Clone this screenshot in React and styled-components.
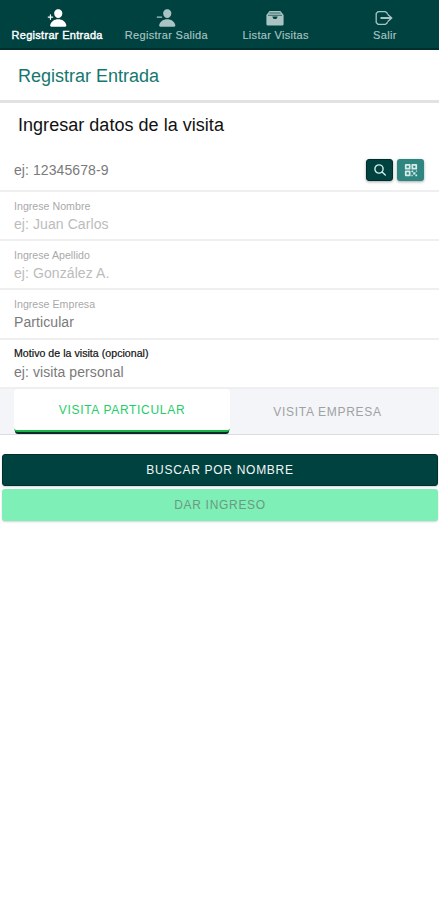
import React from 'react'
import styled, { createGlobalStyle } from 'styled-components'
import { IoPersonAdd, IoPersonRemove, IoQrCode } from 'react-icons/io5'

const GlobalStyle = createGlobalStyle`
  * {
    box-sizing: border-box;
  }
  body {
    margin: 0;
    background: #fff;
    font-family: 'Liberation Sans', Arial, sans-serif;
  }
`
const Page = styled.div`
  min-height: 900px;
  background: #fff;
`
const TabBar = styled.nav`
  display: flex;
  height: 50px;
  padding-left: 2px;
  background: #004240;
  border-bottom: 2px solid #00302e;
`
const NavItem = styled.div`
  flex: 1;
  display: flex;
  flex-direction: column;
  align-items: center;
  padding: 8px 0 0 1px;
  font-size: 11px;
  line-height: 13px;
  letter-spacing: 0.3px;
  white-space: nowrap;
  color: ${(props) => props.$active ? '#fff' : '#a9c4c3'};
  -webkit-text-stroke: ${(props) => props.$active ? '0.4px' : '0.15px'};
  svg {
    width: 20px;
    height: 20px;
    margin: 0 1px 1px 0;
  }
`
const Header = styled.header`
  height: 53px;
  padding: 15px 18px 0;
  border-bottom: 3px solid #e2e2e2;
  font-size: 18px;
  line-height: 22px;
  color: #15776f;
`
const Title = styled.h1`
  margin: 0;
  padding: 12px 18px 0;
  height: 47px;
  font-size: 18px;
  font-weight: 400;
  line-height: 21px;
  letter-spacing: 0.03px;
  color: #111;
`
const SearchRow = styled.div`
  display: flex;
  align-items: center;
  height: 42px;
  padding: 0 15px 0 14px;
  border-bottom: 2px solid #efefef;
`
const Value = styled.div`
  flex: 1;
  font-size: 14px;
  line-height: 18px;
  letter-spacing: 0.08px;
  color: ${(props) => props.$muted ? '#bcbcbc' : '#7a7a7a'};
`
const IconButton = styled.button`
  display: flex;
  align-items: center;
  justify-content: center;
  width: 27px;
  height: 22px;
  margin-left: 4px;
  padding: 0;
  border: ${(props) => props.$light ? '0' : '1px solid #002d2b'};
  border-radius: 3px;
  background: ${(props) => props.$light ? '#2f8580' : '#004240'};
  box-shadow: 0 1px 3px rgba(0, 0, 0, 0.35);
  color: #d5ecea;
  svg {
    width: 14px;
    height: 14px;
  }
`
const Field = styled.div`
  height: ${(props) => props.$height || 49}px;
  padding: ${(props) => props.$dark ? '6px' : '7px'} 14px 0;
  border-bottom: 2px solid #efefef;
`
const Label = styled.div`
  margin-bottom: ${(props) => props.$dark ? '3px' : '2px'};
  font-size: 10.6px;
  line-height: 14px;
  letter-spacing: 0.03px;
  color: ${(props) => props.$dark ? '#111' : '#a9a9a9'};
  -webkit-text-stroke: ${(props) => props.$dark ? '0.2px' : '0'};
`
const Segment = styled.div`
  display: flex;
  height: 46px;
  padding: 0 0 0 14px;
  background: #f3f5f8;
  border-bottom: 1px solid #dcdddf;
`
const SegmentButton = styled.div`
  display: flex;
  align-items: center;
  justify-content: center;
  width: ${(props) => props.$active ? '216px' : '195px'};
  height: 45px;
  font-size: 12px;
  letter-spacing: 0.7px;
  color: #a0a1a3;
  ${(props) => props.$active && `
    height: 43px;
    padding-top: 1px;
    background: #fff;
    border-bottom: 2px solid #17b548;
    border-radius: 4px;
    box-shadow: 0 3px 0 -1px #032b2a;
    color: #25cd68;
  `}
`
const Actions = styled.div`
  display: flex;
  flex-direction: column;
  gap: 3px;
  padding: 19px 1px 0 2px;
`
const ActionButton = styled.button`
  height: 32px;
  padding: 0;
  border: ${(props) => props.$disabled ? '0' : '1px solid #002f2e'};
  border-radius: 3px;
  background: ${(props) => props.$disabled ? '#7eefb6' : '#004240'};
  box-shadow: 0 1px 2px rgba(0, 0, 0, 0.18);
  font-family: inherit;
  font-size: 12px;
  letter-spacing: 0.7px;
  color: ${(props) => props.$disabled ? '#6b9a82' : '#f1f8f7'};
`

const TrayIcon = () => (
  <svg viewBox="0 0 20 20">
    <path d="M4.5 3h11L18.6 7v9a1.5 1.5 0 0 1-1.5 1.5H2.9A1.5 1.5 0 0 1 1.4 16V7z" fill="currentColor" />
    <path d="M3 7.3h14M4.5 5h11" stroke="#386864" strokeWidth="1" />
    <path d="M7.4 8.5h5.2c-.2 1.7-1.1 2.6-2.6 2.6s-2.4-.9-2.6-2.6z" fill="#004240" />
  </svg>
)

const ExitIcon = () => (
  <svg viewBox="0 0 20 20" fill="none" stroke="currentColor" strokeWidth="1.3" strokeLinejoin="round">
    <path d="M13.2 6V5L11.5 3.7H4L2.2 5.5v9L4 16.3h7.5l1.7-1.3v-1" />
    <path d="M6.5 10H17" strokeWidth="2" />
    <path d="M13.5 6.2L17.8 10l-4.3 3.8" />
  </svg>
)

const SearchIcon = () => (
  <svg viewBox="0 0 14 14" fill="none" stroke="currentColor" strokeWidth="1.4" strokeLinecap="round">
    <circle cx="6" cy="6" r="4.1" />
    <path d="M9.1 9.1l3.2 3" />
  </svg>
)

const navItems = [
  { label: 'Registrar Entrada', icon: IoPersonAdd, active: true },
  { label: 'Registrar Salida', icon: IoPersonRemove },
  { label: 'Listar Visitas', icon: TrayIcon },
  { label: 'Salir', icon: ExitIcon }
]

const fields = [
  { label: 'Ingrese Nombre', value: 'ej: Juan Carlos', muted: true },
  { label: 'Ingrese Apellido', value: 'ej: González A.', muted: true },
  { label: 'Ingrese Empresa', value: 'Particular', height: 50 },
  { label: 'Motivo de la visita (opcional)', value: 'ej: visita personal', dark: true }
]

const App = () => (
  <Page>
    <GlobalStyle />
    <TabBar>
      {navItems.map(({ label, icon: Icon, active }) => (
        <NavItem key={label} $active={active}>
          <Icon />
          {label}
        </NavItem>
      ))}
    </TabBar>
    <Header>Registrar Entrada</Header>
    <Title>Ingresar datos de la visita</Title>
    <SearchRow>
      <Value>ej: 12345678-9</Value>
      <IconButton><SearchIcon /></IconButton>
      <IconButton $light><IoQrCode /></IconButton>
    </SearchRow>
    {fields.map(({ label, value, muted, dark, height }) => (
      <Field key={label} $height={height} $dark={dark}>
        <Label $dark={dark}>{label}</Label>
        <Value $muted={muted}>{value}</Value>
      </Field>
    ))}
    <Segment>
      <SegmentButton $active>VISITA PARTICULAR</SegmentButton>
      <SegmentButton>VISITA EMPRESA</SegmentButton>
    </Segment>
    <Actions>
      <ActionButton>BUSCAR POR NOMBRE</ActionButton>
      <ActionButton $disabled>DAR INGRESO</ActionButton>
    </Actions>
  </Page>
)

export default App
